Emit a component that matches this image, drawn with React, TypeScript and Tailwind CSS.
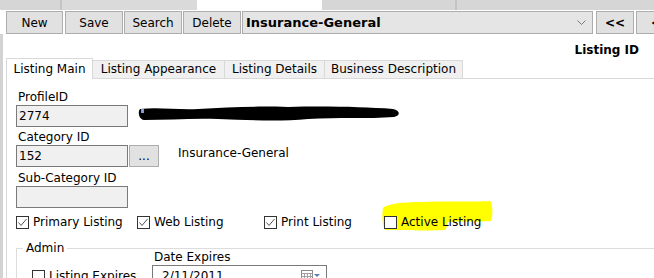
import React from 'react';

const font = "font-['DejaVu_Sans',sans-serif]";

const CheckBox = ({ checked = false }: { checked?: boolean }) => (
  <div className="w-[13px] h-[13px] border border-[#333333] bg-white flex items-center justify-center shrink-0">
    {checked && (
      <svg width="11" height="11" viewBox="0 0 11 11">
        <path d="M1.5 5.5 L4 8.5 L9.5 2" fill="none" stroke="#555555" strokeWidth="1" />
      </svg>
    )}
  </div>
);

const Check = ({ label, checked = false }: { label: string; checked?: boolean }) => (
  <div className="flex items-center gap-[4px]">
    <CheckBox checked={checked} />
    <span className="text-[12px] leading-[16px] text-black whitespace-nowrap">{label}</span>
  </div>
);

const App = () => {
  return (
    <div className={`w-[654px] h-[278px] overflow-hidden bg-white text-black ${font}`}>
      {/* strip of the window tabs above */}
      <div className="flex h-[10px]">
        <div className="w-[60px] bg-[#d6d6d6]" />
        <div className="w-[2px] bg-[#c4c4c4]" />
        <div className="w-[135px] bg-[#dadada]" />
        <div className="w-[125px] bg-white" />
        <div className="w-[133px] bg-[#d6d6d6]" />
        <div className="w-[2px] bg-[#c4c4c4]" />
        <div className="flex-1 bg-[#d6d6d6]" />
      </div>

      {/* toolbar */}
      <div className="flex mt-[1px] h-[23px] pl-[6px] text-[12px]">
        <button className="w-[57px] h-[23px] shrink-0 bg-[#e1e1e1] border border-[#adadad]">New</button>
        <button className="w-[58px] h-[23px] shrink-0 ml-[2px] bg-[#e1e1e1] border border-[#adadad]">Save</button>
        <button className="w-[58px] h-[23px] shrink-0 ml-[1px] bg-[#e1e1e1] border border-[#adadad]">Search</button>
        <button className="w-[58px] h-[23px] shrink-0 ml-[1px] bg-[#e1e1e1] border border-[#adadad]">Delete</button>
        <div className="w-[351px] h-[23px] shrink-0 ml-[1px] bg-[#e5e5e5] border border-[#adadad] flex items-center pl-[3px] pr-[6px]">
          <span className="font-bold text-[13px] flex-1">Insurance-General</span>
          <svg width="9" height="6" viewBox="0 0 9 6">
            <path d="M0.5 0.5 L4.5 4.5 L8.5 0.5" fill="none" stroke="#7a7a7a" strokeWidth="1" />
          </svg>
        </div>
        <button className="w-[38px] h-[23px] shrink-0 ml-[3px] bg-[#e1e1e1] border border-[#adadad] font-bold">&lt;&lt;</button>
        <button className="w-[40px] h-[23px] shrink-0 ml-[2px] bg-[#e1e1e1] border border-[#adadad] font-bold">&lt;</button>
      </div>

      {/* body */}
      <div className="flex h-[244px] border-l-[3px] border-[#d3d3d3]">
        <div className="flex-1 flex flex-col">
          <div className="h-[24px] flex justify-end pr-[15px] pt-[8px]">
            <span className="font-bold text-[12px] leading-[16px]">Listing ID</span>
          </div>

          {/* tabs */}
          <div className="flex items-end h-[21px] ml-[3px] border-b border-[#d9d9d9] text-[12px]">
            <div className="w-[87px] h-[21px] -mb-px bg-white border border-b-0 border-[#d9d9d9] text-center pt-[2px] leading-[16px]">Listing Main</div>
            <div className="w-[132px] h-[18px] bg-[#f0f0f0] border-t border-r border-[#d9d9d9] text-center leading-[16px]">Listing Appearance</div>
            <div className="w-[100px] h-[18px] bg-[#f0f0f0] border-t border-r border-[#d9d9d9] text-center leading-[16px]">Listing Details</div>
            <div className="w-[138px] h-[18px] bg-[#f0f0f0] border-t border-r border-[#d9d9d9] text-center leading-[16px]">Business Description</div>
          </div>

          {/* tab page */}
          <div className="flex-1 ml-[3px] border-l border-[#d9d9d9] pl-[9px] text-[12px]">
            <div className="mt-[10px] ml-[2px] leading-[16px]">ProfileID</div>
            <div className="flex items-center">
              <div className="w-[112px] h-[22px] bg-[#f0f0f0] border border-[#7a7a7a] pl-[2px] leading-[20px]">2774</div>
              <svg className="ml-[10px] -mt-[4px]" width="262" height="20" viewBox="0 0 262 20">
                <path
                  d="M2 5 C20 3 40 6 60 5 C90 3 120 2 150 3 C190 2 225 3 255 5 C262 6 263 12 256 13 C230 15 200 13 170 15 C140 18 110 16 80 15 C55 14 30 16 6 16 C0 15 0 7 2 5 Z"
                  fill="#000000"
                />
                <rect x="3" y="5" width="3" height="4" fill="#7f9fd0" />
              </svg>
            </div>
            <div className="mt-[2px] ml-[2px] leading-[16px]">Category ID</div>
            <div className="flex items-center">
              <div className="w-[112px] h-[22px] bg-[#f0f0f0] border border-[#7a7a7a] pl-[2px] leading-[20px]">152</div>
              <button className="w-[30px] h-[22px] ml-[1px] bg-[#e1e1e1] border border-[#adadad] leading-[20px]">...</button>
              <span className="ml-[19px] -mt-[6px]">Insurance-General</span>
            </div>
            <div className="mt-[3px] ml-[2px] leading-[16px]">Sub-Category ID</div>
            <div className="w-[112px] h-[22px] bg-[#f0f0f0] border border-[#7a7a7a]" />

            <div className="flex items-center h-[20px] mt-[4px]">
              <div className="w-[121px]"><Check label="Primary Listing" checked /></div>
              <div className="w-[127px]"><Check label="Web Listing" checked /></div>
              <div className="w-[120px]"><Check label="Print Listing" checked /></div>
              <div className="relative">
                <svg className="absolute -left-[2px] -top-[13px]" width="112" height="30" viewBox="0 0 112 30">
                  <path
                    d="M1 7 C5 3 20 1 40 1 C60 0 90 1 108 0 C111 2 111 16 109 20 C95 21 80 20 66 21 C64 24 66 28 62 29 C45 30 20 29 3 29 C0 24 0 12 1 7 Z"
                    fill="#ffff00"
                  />
                </svg>
                <div className="relative"><Check label="Active Listing" /></div>
              </div>
            </div>

            {/* admin group */}
            <div className="relative mt-[16px] border-t border-l border-[#dcdcdc] flex">
              <span className="absolute left-[6px] -top-[9px] bg-white px-[3px] leading-[16px]">Admin</span>
              <div className="w-[135px] pl-[15px] pt-[19px]">
                <Check label="Listing Expires" />
              </div>
              <div className="flex flex-col">
                <div className="pl-[2px] leading-[16px]">Date Expires</div>
                <div className="w-[175px] h-[22px] border border-[#7a7a7a] flex items-center pl-[9px] pr-[5px]">
                  <span className="flex-1">2/11/2011</span>
                  <svg width="20" height="12" viewBox="0 0 20 12">
                    <rect x="0.5" y="0.5" width="11" height="11" fill="#ffffff" stroke="#8a8a8a" />
                    <path d="M0.5 3.5 H11.5 M0.5 6.5 H11.5 M0.5 9.5 H11.5 M3.5 3.5 V11.5 M6.5 3.5 V11.5 M9.5 3.5 V11.5" stroke="#a0a0a0" strokeWidth="1" />
                    <path d="M13 4 L19 4 L16 7 Z" fill="#5a7fb8" />
                  </svg>
                </div>
              </div>
            </div>
          </div>
        </div>
      </div>
    </div>
  );
};

export default App;
